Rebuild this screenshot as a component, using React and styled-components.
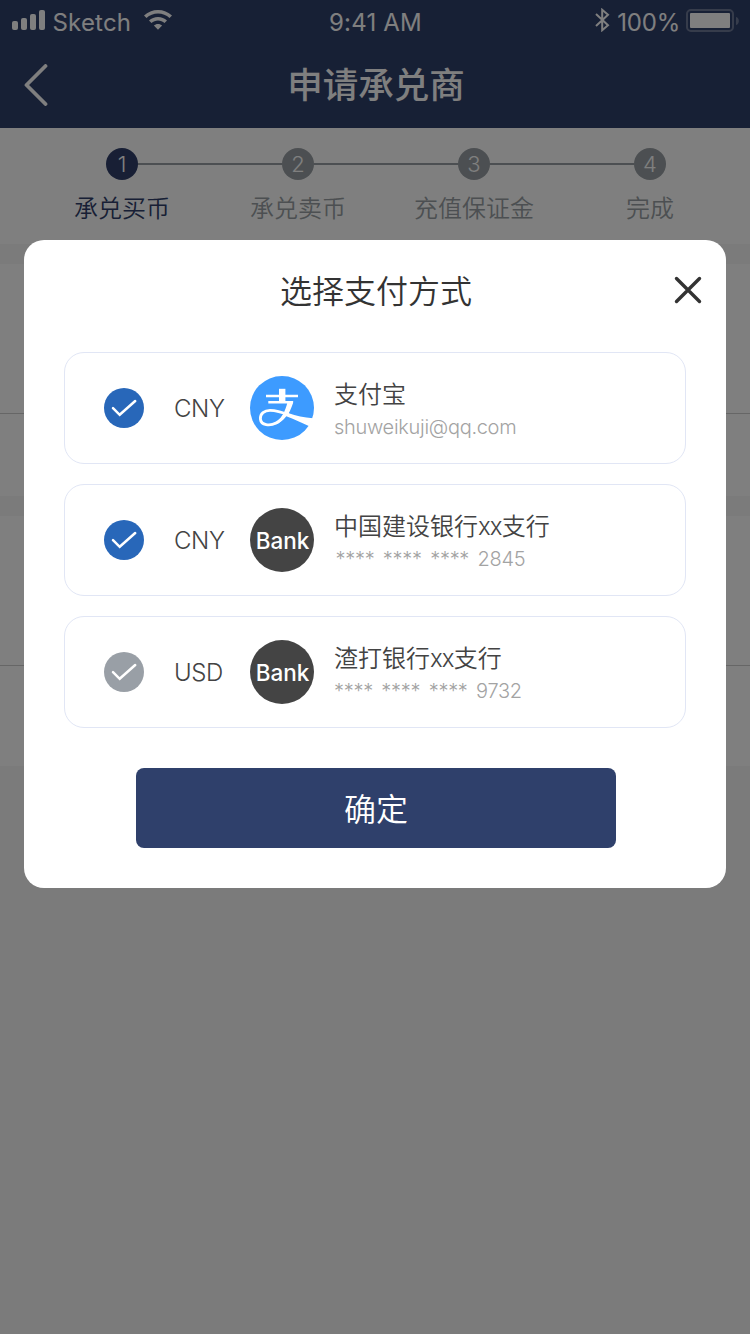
import React from 'react';
import styled, { createGlobalStyle } from 'styled-components';

const Global = createGlobalStyle`
  * { box-sizing: border-box; }
  body { margin: 0; background: #f7f7f7; font-family: Inter, "Noto Sans CJK SC", sans-serif; }
  button { font: inherit; border: 0; padding: 0; background: none; }
`;

const Screen = styled.div`
  position: relative;
  width: 750px;
  height: 1334px;
  overflow: hidden;
  background: #f7f7f7;
`;

const Header = styled.header`
  height: 128px;
  background: #2f406b;
  color: #fff;
`;

const StatusBar = styled.div`
  display: grid;
  grid-template-columns: 1fr auto 1fr;
  height: 40px;
  padding: 0 11px 0 12px;
  font-size: 24px;
  font-weight: 380;
  line-height: 46px;
`;

const StatusGroup = styled.div`
  display: flex;
  align-items: flex-start;
  justify-content: ${(p) => (p.$end ? 'flex-end' : 'flex-start')};
`;

const StatusText = styled.span`
  letter-spacing: ${(p) => p.$tracking || 0}px;
  white-space: nowrap;
`;

const StatusIcon = styled.svg`
  flex: none;
  margin: ${(p) => p.$margin};
`;

const NavBar = styled.div`
  display: grid;
  grid-template-columns: 60px 1fr 60px;
  align-items: center;
  height: 88px;
  padding-top: 2px;
`;

const BackButton = styled.button`
  display: flex;
  padding-left: 24px;
  color: inherit;
`;

const NavTitle = styled.h1`
  margin: 0;
  padding: 2px 0 0 2px;
  font-size: 35.5px;
  font-weight: 500;
  line-height: 84px;
  text-align: center;
`;

const Steps = styled.ol`
  display: flex;
  margin: 0 0 20px;
  padding: 20px 12px 0 34px;
  height: 116px;
  list-style: none;
  background: #fff;
`;

const Step = styled.li`
  display: flex;
  flex-direction: column;
  width: 176px;
  flex: none;
  align-items: center;
  color: ${(p) => (p.$active ? '#303f6b' : '#999fa4')};
`;

const StepTrack = styled.div`
  display: flex;
  align-items: center;
  width: 100%;
`;

const StepLine = styled.span`
  flex: 1;
  height: 2px;
  background: ${(p) => (p.$hidden ? 'transparent' : '#999fa4')};
`;

const StepDot = styled.span`
  width: 32px;
  height: 32px;
  border-radius: 50%;
  background: ${(p) => (p.$active ? '#303f6b' : '#999fa4')};
  color: #fff;
  font-size: 22px;
  font-weight: 300;
  line-height: 33px;
  text-align: center;
`;

const StepLabel = styled.span`
  margin-top: 11px;
  font-size: 24px;
  font-weight: 350;
  line-height: 36px;
  white-space: nowrap;
`;

const Section = styled.section`
  margin-bottom: 20px;
  background: #fff;
`;

const SectionRow = styled.div`
  height: ${(p) => p.$height}px;
  border-bottom: ${(p) => (p.$divided ? '1px solid #cccccc' : '0')};
`;

const Overlay = styled.div`
  position: absolute;
  inset: 0;
  padding: 240px 24px 0;
  background: rgba(0, 0, 0, 0.5);
`;

const Dialog = styled.div`
  height: 648px;
  border-radius: 20px;
  background: #fff;
  color: #434343;
`;

const DialogHeader = styled.div`
  display: grid;
  grid-template-columns: 60px 1fr 60px;
  align-items: center;
  height: 112px;
  padding-bottom: 12px;
`;

const DialogTitle = styled.h2`
  grid-column: 2;
  margin: 0;
  padding: 3px 0 0 2px;
  color: #333;
  font-size: 32px;
  font-weight: 350;
  line-height: 48px;
  text-align: center;
`;

const CloseButton = styled.button`
  display: flex;
  padding-left: 8px;
`;

const MethodList = styled.div`
  display: grid;
  gap: 20px;
  padding: 0 40px;
`;

const Method = styled.div`
  display: flex;
  align-items: center;
  height: 112px;
  padding-left: 39px;
  border: 1px solid #e1e6f5;
  border-radius: 20px;
`;

const Check = styled.span`
  display: flex;
  width: 40px;
  height: 40px;
  border-radius: 50%;
  background: ${(p) => (p.$on ? '#2867b9' : '#999fa6')};
`;

const Currency = styled.span`
  width: 76px;
  margin-left: 30px;
  font-size: 24px;
  font-weight: 300;
  letter-spacing: -0.4px;
`;

const Badge = styled.span`
  display: flex;
  align-items: center;
  justify-content: center;
  width: 64px;
  height: 64px;
  padding-left: 1px;
  border-radius: 50%;
  background: #444;
  color: #fff;
  font-size: 22.5px;
  font-weight: 480;
`;

const Details = styled.div`
  display: flex;
  flex-direction: column;
  padding-top: 2px;
  margin-left: 20px;
`;

const Name = styled.span`
  font-size: 24px;
  font-weight: 350;
  line-height: 36px;
`;

const Latin = styled.span`
  letter-spacing: -0.9px;
`;

const Account = styled.span`
  padding-left: ${(p) => p.$indent || 0}px;
  color: #a3a3a3;
  font-size: 20px;
  font-weight: 320;
  line-height: 29px;
  letter-spacing: -0.3px;
  word-spacing: 3.2px;
`;

const Confirm = styled.button`
  display: block;
  width: 480px;
  height: 80px;
  padding-top: 3px;
  margin: 40px 0 0 112px;
  border-radius: 8px;
  background: #2f406b;
  color: #fff;
  font-size: 32px;
  font-weight: 350;
  line-height: 77px;
`;

const AlipayIcon = () => (
  <svg width="64" height="64" viewBox="0 0 64 64">
    <circle cx="32" cy="32" r="32" fill="#3d9bff" />
    <g fill="none" stroke="#fff">
      <path d="M16 20H48M18.300 26.200H43" strokeWidth="2.500" />
      <path d="M32.200 12.800V26" strokeWidth="6.400" />
      <path
        d="M36 37C33.500 41 30 45 26 47C20 50.300 11 49.500 10.400 43C10 37.500 14.500 34.300 20 34.300C27 34.300 33 36.500 39 39"
        strokeWidth="2.800"
      />
    </g>
    <path
      d="M37.600 25.500H43.400C42.300 30 40.500 34 38.700 37.300C46 39.700 54 41.800 63 42.200C62.300 45 60.700 47.800 58.800 50C51.500 47 44 43.200 36.300 40.300C33 44.500 29.500 47.300 25 48.800C31 43 35.700 35 37.600 25.500Z"
      fill="#fff"
    />
  </svg>
);

const CheckMark = () => (
  <svg width="40" height="40" viewBox="0 0 40 40">
    <path d="M9 20.200L15.700 26.800L31.200 13" fill="none" stroke="#fff" strokeWidth="2.500" strokeLinecap="round" />
  </svg>
);

const steps = ['承兑买币', '承兑卖币', '充值保证金', '完成'];

const methods = [
  { on: true, currency: 'CNY', name: ['支付宝'], account: 'shuweikuji@qq.com', alipay: true },
  { on: true, currency: 'CNY', name: ['中国建设银行', 'xx', '支行'], account: '**** **** **** 2845', indent: 1.5 },
  { on: false, currency: 'USD', name: ['渣打银行', 'xx', '支行'], account: '**** **** **** 9732' },
];

export default function App() {
  return (
    <Screen>
      <Global />
      <Header>
        <StatusBar>
          <StatusGroup>
            <StatusIcon width="34" height="20" viewBox="0 0 34 20" $margin="10px 6.500px 0 0" fill="#fff">
              <rect y="11" width="6" height="9" rx="2" />
              <rect x="9" y="8" width="6" height="12" rx="2" />
              <rect x="18" y="4" width="6" height="16" rx="2" />
              <rect x="27" width="6" height="20" rx="2" />
            </StatusIcon>
            <StatusText $tracking={0.2}>Sketch</StatusText>
            <StatusIcon width="28" height="20" viewBox="0 0 28 20" $margin="10px 0 0 13px" fill="#fff">
              <path d="M14 0C8.700 0 3.700 2 0 5.500L2.500 8C5.600 5.100 9.600 3.500 14 3.500S22.400 5.100 25.500 8L28 5.500C24.300 2 19.300 0 14 0Z" />
              <path d="M14 7C10.600 7 7.400 8.300 5 10.500L7.500 13C9.300 11.400 11.500 10.500 14 10.500S18.700 11.400 20.500 13L23 10.500C20.600 8.300 17.400 7 14 7Z" />
              <path d="M14 13.900C12.400 13.900 11 14.500 9.900 15.600L14 19.800L18.100 15.600C17 14.500 15.600 13.900 14 13.900Z" />
            </StatusIcon>
          </StatusGroup>
          <StatusText $tracking={0.2}>9:41 AM</StatusText>
          <StatusGroup $end>
            <StatusIcon width="15" height="24" viewBox="0 0 15 24" $margin="8px 7px 0 0" fill="none" stroke="#fff" strokeWidth="2">
              <path d="M1 6L13 17.200L7.200 22.200V1.800L13 6.800L1 18" />
            </StatusIcon>
            <StatusText $tracking={-0.2}>100%</StatusText>
            <StatusIcon width="53" height="23" viewBox="0 0 53 23" $margin="9px 0 0 6px">
              <rect x="1" y="1" width="46" height="21" rx="4" fill="none" stroke="#fff" strokeOpacity=".3" strokeWidth="2" />
              <rect x="4" y="4" width="40" height="15" rx="1" fill="#fff" />
              <path d="M50 8C53.800 9 53.800 15 50 16Z" fill="#fff" fillOpacity=".3" />
            </StatusIcon>
          </StatusGroup>
        </StatusBar>
        <NavBar>
          <BackButton aria-label="返回">
            <svg width="24" height="42" viewBox="0 0 24 42">
              <path d="M21.500 2L2.500 21L21.500 40" fill="none" stroke="#fff" strokeWidth="3.800" strokeLinecap="round" strokeLinejoin="round" />
            </svg>
          </BackButton>
          <NavTitle>申请承兑商</NavTitle>
        </NavBar>
      </Header>
      <Steps>
        {steps.map((label, i) => (
          <Step key={label} $active={i === 0}>
            <StepTrack>
              <StepLine $hidden={i === 0} />
              <StepDot $active={i === 0}>{i + 1}</StepDot>
              <StepLine $hidden={i === steps.length - 1} />
            </StepTrack>
            <StepLabel>{label}</StepLabel>
          </Step>
        ))}
      </Steps>
      <Section>
        <SectionRow $height={150} $divided />
        <SectionRow $height={82} />
      </Section>
      <Section>
        <SectionRow $height={150} $divided />
        <SectionRow $height={100} />
      </Section>
      <Overlay>
        <Dialog role="dialog">
          <DialogHeader>
            <DialogTitle>选择支付方式</DialogTitle>
            <CloseButton aria-label="关闭">
              <svg width="28" height="28" viewBox="0 0 28 28">
                <path d="M2.500 2.500L25.500 25.500M25.500 2.500L2.500 25.500" stroke="#333" strokeWidth="3.400" strokeLinecap="round" />
              </svg>
            </CloseButton>
          </DialogHeader>
          <MethodList>
            {methods.map((m) => (
              <Method key={m.account}>
                <Check $on={m.on}><CheckMark /></Check>
                <Currency>{m.currency}</Currency>
                {m.alipay ? <AlipayIcon /> : <Badge>Bank</Badge>}
                <Details>
                  <Name>
                    {m.name[0]}
                    {m.name[1] && <Latin>{m.name[1]}</Latin>}
                    {m.name[2]}
                  </Name>
                  <Account $indent={m.indent}>{m.account}</Account>
                </Details>
              </Method>
            ))}
          </MethodList>
          <Confirm>确定</Confirm>
        </Dialog>
      </Overlay>
    </Screen>
  );
}
